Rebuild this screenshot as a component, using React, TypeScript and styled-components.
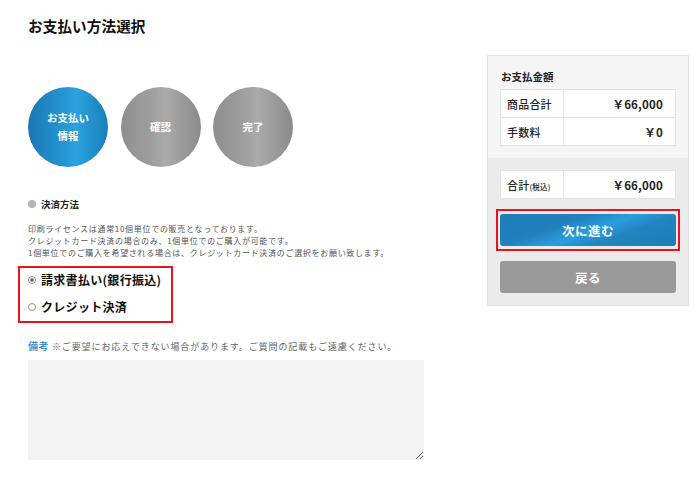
import React from "react";
import styled, { createGlobalStyle } from "styled-components";

const Global = createGlobalStyle`
  html, body { margin: 0; padding: 0; background: #fff; }
  body { font-family: "Noto Sans CJK JP", "Noto Sans", sans-serif; color: #222; }
  * { box-sizing: border-box; }
`;

const Page = styled.div`
  width: 700px;
  height: 477px;
  padding: 15px 11px 0 28px;
  overflow: hidden;
`;

const Title = styled.h1`
  margin: 0;
  font-size: 14.6px;
  line-height: 22px;
  font-weight: 700;
  color: #111;
  letter-spacing: 0.1px;
`;

const Row = styled.div`
  display: flex;
  margin-top: 18px;
  gap: 63px;
`;

const LeftCol = styled.div`
  width: 396px;
  display: flex;
  flex-direction: column;
  align-items: flex-start;
`;

const Steps = styled.div`
  display: flex;
  gap: 12.5px;
  margin-top: 32px;
`;

const Step = styled.div<{ $active?: boolean }>`
  width: 80px;
  height: 80px;
  border-radius: 50%;
  display: flex;
  align-items: center;
  justify-content: center;
  text-align: center;
  color: #fff;
  font-weight: 700;
  font-size: 10.5px;
  line-height: 18px;
  background: ${(p) =>
    p.$active
      ? "linear-gradient(to right, #1b77b4 0%, #2596d3 45%, #2aa2de 60%, #1a7fbb 100%)"
      : "linear-gradient(to right, #8e8e8e 0%, #a2a2a2 45%, #ababab 55%, #8a8a8a 100%)"};
`;

const SectionLabel = styled.div`
  display: flex;
  align-items: center;
  gap: 5px;
  margin-top: 30px;
  font-size: 9.5px;
  line-height: 14px;
  font-weight: 700;
  color: #222;
`;

const Dot = styled.span`
  width: 8px;
  height: 8px;
  border-radius: 50%;
  background: #b5b5b5;
`;

const Note = styled.p`
  margin: 12px 0 0;
  font-size: 8px;
  line-height: 12px;
  letter-spacing: 0.7px;
  color: #555;
  white-space: nowrap;
`;

const Options = styled.div`
  margin: 7px 0 0 -10px;
  border: 2px solid #e8141c;
  padding: 2px 10px 4px 8px;
  display: flex;
  flex-direction: column;
  gap: 7px;
`;

const Option = styled.label`
  display: flex;
  align-items: center;
  gap: 5px;
  font-size: 12px;
  line-height: 20px;
  font-weight: 700;
  color: #111;
  letter-spacing: 0.3px;
`;

const Radio = styled.span<{ $checked?: boolean }>`
  width: 8px;
  height: 8px;
  border-radius: 50%;
  border: 1px solid #8a8a8a;
  background: #fff;
  display: flex;
  align-items: center;
  justify-content: center;
  &::after {
    content: "";
    width: 4px;
    height: 4px;
    border-radius: 50%;
    background: ${(p) => (p.$checked ? "#777" : "transparent")};
  }
`;

const Memo = styled.div`
  margin-top: 16px;
  font-size: 9px;
  line-height: 14px;
  letter-spacing: 0.9px;
  color: #666;
  white-space: nowrap;
`;

const MemoLabel = styled.span`
  color: #2a84c6;
  font-size: 10px;
  font-weight: 500;
  letter-spacing: 0.5px;
`;

const TextArea = styled.textarea`
  margin-top: 6px;
  width: 396px;
  height: 100px;
  background: #f3f3f3;
  border: none;
  outline: none;
  padding: 6px;
  font-family: inherit;
`;

const Panel = styled.aside`
  width: 202px;
  border: 1px solid #e4e4e4;
  align-self: flex-start;
`;

const PanelTop = styled.div`
  background: #f5f5f5;
  padding: 11px 12px 12px 12px;
`;

const PanelBottom = styled.div`
  background: #ebebeb;
  padding: 12px 12px 12px 12px;
`;

const PanelHeading = styled.div`
  font-size: 10.5px;
  line-height: 16px;
  font-weight: 700;
  color: #222;
  margin: 2px 0 4px 1px;
`;

const Table = styled.table`
  width: 100%;
  border-collapse: collapse;
  background: #fff;
`;

const Cell = styled.td<{ $value?: boolean }>`
  border: 1px solid #e3e3e3;
  height: 28px;
  padding: 0 ${(p) => (p.$value ? "12px" : "6px")};
  font-size: ${(p) => (p.$value ? "11.5px" : "11px")};
  font-weight: ${(p) => (p.$value ? 700 : 500)};
  text-align: ${(p) => (p.$value ? "right" : "left")};
  width: ${(p) => (p.$value ? "auto" : "63px")};
  color: #222;
  white-space: nowrap;
  letter-spacing: 0.2px;
`;

const Small = styled.span`
  font-size: 7.5px;
`;

const Highlight = styled.div`
  margin-top: 10px;
  margin-left: -4px;
  margin-right: -4px;
  border: 2px solid #e8141c;
  padding: 3px 2px 3px 2px;
`;

const Button = styled.button<{ $primary?: boolean }>`
  display: block;
  width: 100%;
  height: 32px;
  border: none;
  border-radius: 3px;
  color: #fff;
  font-family: inherit;
  font-size: 12.5px;
  font-weight: 700;
  letter-spacing: 0.5px;
  background: ${(p) =>
    p.$primary
      ? "linear-gradient(160deg, #1f7cb8 0%, #2181bd 35%, #2a9fdc 52%, #2283bf 68%, #1f7db9 100%)"
      : "#999999"};
`;

const BackWrap = styled.div`
  margin-top: 10px;
`;

export default function App() {
  return (
    <>
      <Global />
      <Page>
        <Title>お支払い方法選択</Title>
        <Row>
          <LeftCol>
            <Steps>
              <Step $active>
                お支払い
                <br />
                情報
              </Step>
              <Step>確認</Step>
              <Step>完了</Step>
            </Steps>
            <SectionLabel>
              <Dot />
              決済方法
            </SectionLabel>
            <Note>
              印刷ライセンスは通常10個単位での販売となっております。
              <br />
              クレジットカード決済の場合のみ、1個単位でのご購入が可能です。
              <br />
              1個単位でのご購入を希望される場合は、クレジットカード決済のご選択をお願い致します。
            </Note>
            <Options>
              <Option>
                <Radio $checked />
                請求書払い(銀行振込)
              </Option>
              <Option>
                <Radio />
                クレジット決済
              </Option>
            </Options>
            <Memo>
              <MemoLabel>備考</MemoLabel> ※ご要望にお応えできない場合があります。ご質問の記載もご遠慮ください。
            </Memo>
            <TextArea />
          </LeftCol>
          <Panel>
            <PanelTop>
              <PanelHeading>お支払金額</PanelHeading>
              <Table>
                <tbody>
                  <tr>
                    <Cell>商品合計</Cell>
                    <Cell $value>￥66,000</Cell>
                  </tr>
                  <tr>
                    <Cell>手数料</Cell>
                    <Cell $value>￥0</Cell>
                  </tr>
                </tbody>
              </Table>
            </PanelTop>
            <PanelBottom>
              <Table>
                <tbody>
                  <tr>
                    <Cell>
                      合計<Small>(税込)</Small>
                    </Cell>
                    <Cell $value>￥66,000</Cell>
                  </tr>
                </tbody>
              </Table>
              <Highlight>
                <Button $primary>次に進む</Button>
              </Highlight>
              <BackWrap>
                <Button>戻る</Button>
              </BackWrap>
            </PanelBottom>
          </Panel>
        </Row>
      </Page>
    </>
  );
}
